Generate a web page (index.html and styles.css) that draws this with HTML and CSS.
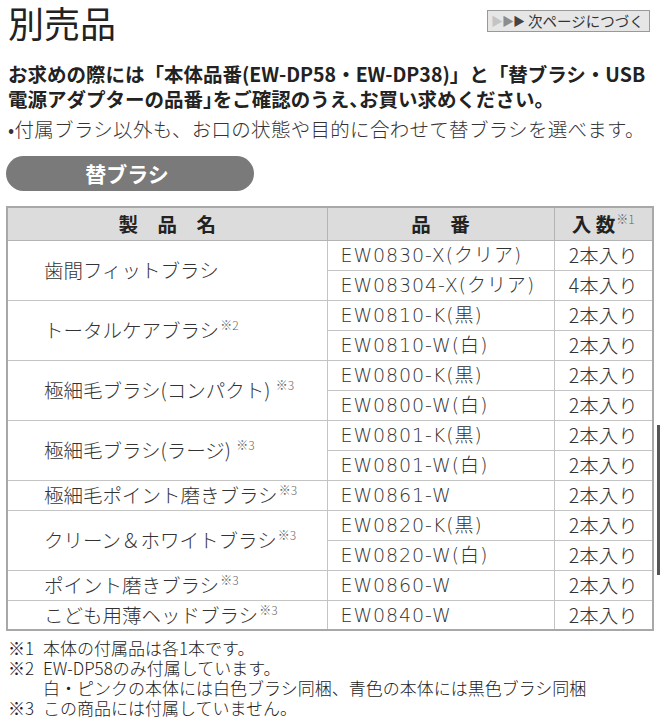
FILE: index.html
```html
<!DOCTYPE html>
<html lang="ja">
<head>
<meta charset="utf-8">
<link rel="stylesheet" href="styles.css">
</head>
<body>
<div class="page">
  <header class="top">
    <h1 class="title">別売品</h1>
    <div class="next"><span class="tri t1">▶</span><span class="tri t2">▶</span><span class="tri t3">▶</span>次ページにつづく</div>
  </header>
  <p class="lead">お求めの際には「本体品番(EW-DP58・EW-DP38)」と「替ブラシ・USB<br>電源アダプターの品番<span class="half">」</span>をご確認のうえ<span class="half">、</span>お買い求めください。</p>
  <p class="note">•付属ブラシ以外も、お口の状態や目的に合わせて替ブラシを選べます。</p>
  <div class="pill">替ブラシ</div>
  <table class="tbl">
    <colgroup><col class="c1"><col class="c2"><col class="c3"></colgroup>
    <thead>
      <tr><th>製　品　名</th><th>品　番</th><th>入 数<sup class="hs">※1</sup></th></tr>
    </thead>
    <tbody>
      <tr><td class="name" rowspan="2">歯間フィットブラシ</td><td class="pn">EW0830-X(クリア)</td><td class="qty">2本入り</td></tr>
      <tr><td class="pn">EW08304-X(クリア)</td><td class="qty">4本入り</td></tr>
      <tr><td class="name" rowspan="2">トータルケアブラシ<sup>※2</sup></td><td class="pn">EW0810-K(黒)</td><td class="qty">2本入り</td></tr>
      <tr><td class="pn">EW0810-W(白)</td><td class="qty">2本入り</td></tr>
      <tr><td class="name" rowspan="2">極細毛ブラシ(コンパクト) <sup>※3</sup></td><td class="pn">EW0800-K(黒)</td><td class="qty">2本入り</td></tr>
      <tr><td class="pn">EW0800-W(白)</td><td class="qty">2本入り</td></tr>
      <tr><td class="name" rowspan="2">極細毛ブラシ(ラージ) <sup>※3</sup></td><td class="pn">EW0801-K(黒)</td><td class="qty">2本入り</td></tr>
      <tr><td class="pn">EW0801-W(白)</td><td class="qty">2本入り</td></tr>
      <tr><td class="name">極細毛ポイント磨きブラシ<sup>※3</sup></td><td class="pn">EW0861-W</td><td class="qty">2本入り</td></tr>
      <tr><td class="name" rowspan="2">クリーン＆ホワイトブラシ<sup>※3</sup></td><td class="pn">EW0820-K(黒)</td><td class="qty">2本入り</td></tr>
      <tr><td class="pn">EW0820-W(白)</td><td class="qty">2本入り</td></tr>
      <tr><td class="name">ポイント磨きブラシ<sup>※3</sup></td><td class="pn">EW0860-W</td><td class="qty">2本入り</td></tr>
      <tr><td class="name">こども用薄ヘッドブラシ<sup>※3</sup></td><td class="pn">EW0840-W</td><td class="qty">2本入り</td></tr>
    </tbody>
  </table>
  <div class="foot">
    <p class="fn"><span class="mk">※1</span><span>本体の付属品は各1本です。</span></p>
    <p class="fn"><span class="mk">※2</span><span>EW-DP58のみ付属しています。</span></p>
    <p class="fn"><span class="mk"></span><span>白・ピンクの本体には白色ブラシ同梱、青色の本体には黒色ブラシ同梱</span></p>
    <p class="fn"><span class="mk">※3</span><span>この商品には付属していません。</span></p>
  </div>
  <div class="scroll"></div>
</div>
</body>
</html>
```
FILE: styles.css
```css
* { box-sizing: border-box; }
html, body { margin: 0; padding: 0; background: #fff; }
body {
  font-family: "Noto Sans CJK JP", "Noto Sans", sans-serif;
  color: #2a2a2a;
  width: 660px;
  height: 720px;
  overflow: hidden;
}
.page { position: relative; padding: 0 8px 0 8px; }
.top {
  display: flex;
  justify-content: space-between;
  align-items: flex-start;
  height: 52px;
}
.title {
  margin: -4px 0 0 0;
  font-size: 36px;
  font-weight: 400;
  line-height: 52px;
  color: #222;
}
.next {
  margin-top: 10px;
  margin-right: 2px;
  width: 163px;
  height: 22px;
  border: 1px solid #999;
  background: #e6e6e6;
  font-size: 14.5px;
  line-height: 20px;
  color: #333;
  display: flex;
  align-items: center;
  padding-left: 3px;
}
.tri { font-size: 12px; width: 11px; text-align: center; }
.t1 { color: #c4c4c4; }
.t2 { color: #8c8c8c; }
.t3 { color: #444; margin-right: 4px; }
.lead {
  margin: 9px 0 0 0;
  font-size: 19.5px;
  font-weight: 700;
  line-height: 25px;
  color: #222;
}
.half { font-feature-settings: "halt"; }
.note {
  margin: 5px 0 0 0;
  font-size: 19.5px;
  font-weight: 300;
  line-height: 26px;
  color: #333;
  letter-spacing: 0.3px;
}
.pill {
  margin: 14px 0 0 -2px;
  width: 248px;
  height: 35px;
  border-radius: 18px;
  background: #7a7a7a;
  color: #fff;
  font-size: 21px;
  font-weight: 700;
  line-height: 35px;
  text-align: center;
  padding-right: 6px;
}
.tbl {
  margin: 15px 0 0 -2px;
  border-collapse: collapse;
  width: 646px;
  table-layout: fixed;
  border: 2px solid #a8a8a8;
  font-size: 19.5px;
  font-weight: 300;
  color: #333;
}
.c1 { width: 320px; }
.c2 { width: 227px; }
.c3 { width: 99px; }
.tbl th {
  height: 33px;
  background: #dcdcdc;
  font-weight: 700;
  font-size: 19.5px;
  color: #222;
  border: 1px solid #b4b4b4;
  border-top: 2px solid #a8a8a8;
  padding: 0;
  line-height: 30px;
}
.tbl td {
  height: 30px;
  padding: 0;
  border: 1px solid #c4c4c4;
  line-height: 28px;
  white-space: nowrap;
}
.name { padding-left: 36px !important; }
.pn {
  padding-left: 13px !important;
  font-family: "DejaVu Sans", "Noto Sans CJK JP", sans-serif;
  font-weight: 200;
  font-size: 19px;
  letter-spacing: 0.9px;
}
.qty { text-align: center; }
.tbl sup {
  font-size: 12px;
  color: #666;
  vertical-align: 8px;
  line-height: 0;
  margin-left: 1px;
  font-weight: 300;
}
.foot {
  margin-top: 7px;
  font-size: 17px;
  font-weight: 300;
  line-height: 20px;
  color: #222;
}
.fn { margin: 0; display: flex; }
.mk { width: 35px; flex: none; }
.scroll {
  position: absolute;
  left: 657px;
  top: 425px;
  width: 3px;
  height: 150px;
  background: #555;
}
```
